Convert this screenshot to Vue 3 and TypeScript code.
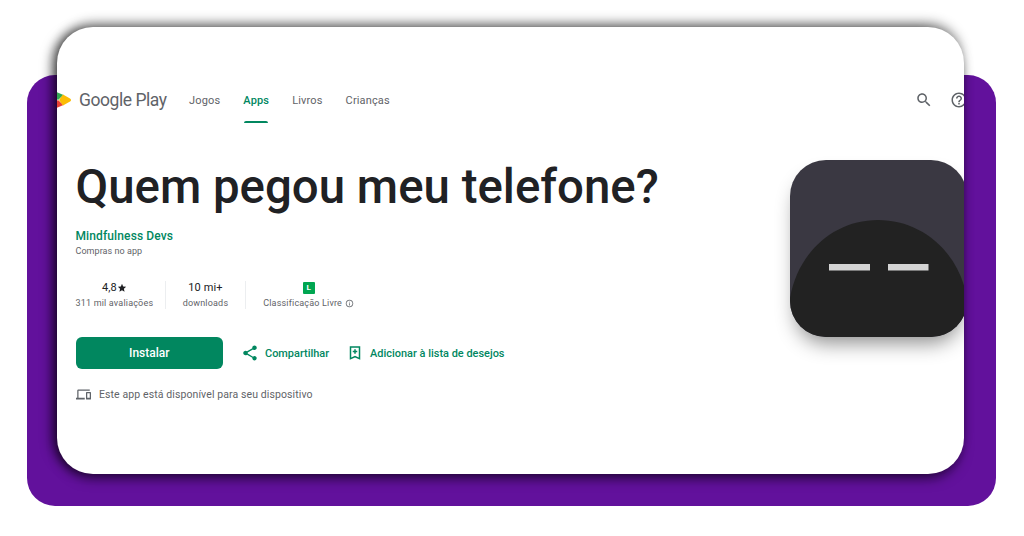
<template>
  <div class="stage">
    <div class="backdrop"></div>
    <div class="card">
      <header class="topbar">
        <svg class="play-mark" viewBox="0 0 28 20" width="28" height="20">
          <path d="M8 0 L19.5 5 L14 10 L8 6 Z" fill="#34a853" />
          <path d="M8 20 L19.5 15 L14 10 L8 14 Z" fill="#ea4335" />
          <path d="M15 10 L19 4.4 L26 8.4 Q28 10 26 11.6 L19 15.6 Z" fill="#fbbc04" />
        </svg>
        <span class="wordmark">Google Play</span>
        <nav class="nav">
          <a v-for="item in navItems" :key="item" :class="['nav-item', { active: item === 'Apps' }]">{{ item }}</a>
        </nav>
        <div class="top-icons">
          <svg viewBox="0 0 24 24" width="18" height="18"><path :d="icons.search" /></svg>
          <svg viewBox="0 0 24 24" width="18" height="18"><path :d="icons.help" /></svg>
        </div>
      </header>

      <main class="hero">
        <div class="details">
          <h1 class="title">Quem pegou meu telefone?</h1>
          <a class="developer">Mindfulness Devs</a>
          <div class="purchases">Compras no app</div>

          <div class="stats">
            <div class="stat stat-rating">
              <div class="stat-value">4,8<svg viewBox="0 0 24 24" width="10" height="10"><path :d="icons.star" /></svg></div>
              <div class="stat-label">311 mil avaliações</div>
            </div>
            <div class="stat stat-downloads">
              <div class="stat-value">10 mi+</div>
              <div class="stat-label">downloads</div>
            </div>
            <div class="stat stat-age">
              <div class="stat-value"><span class="age-badge">L</span></div>
              <div class="stat-label">
                Classificação Livre
                <svg viewBox="0 0 24 24" width="9" height="9"><path :d="icons.info" /></svg>
              </div>
            </div>
          </div>

          <div class="actions">
            <button class="install">Instalar</button>
            <a class="action action-share">
              <svg viewBox="0 0 24 24" width="18" height="18"><path :d="icons.share" /></svg>
              Compartilhar
            </a>
            <a class="action">
              <svg viewBox="0 0 24 24" width="18" height="18"><path :d="icons.bookmark" /></svg>
              Adicionar à lista de desejos
            </a>
          </div>

          <div class="device-note">
            <svg viewBox="0 0 24 24" width="15" height="15"><path :d="icons.devices" /></svg>
            Este app está disponível para seu dispositivo
          </div>
        </div>

        <div class="app-icon">
          <svg viewBox="0 0 177 177" width="177" height="177">
            <rect width="177" height="177" fill="#3a3842" />
            <path d="M0 138 C8 92 44 60 88 60 S169 92 177 138 V177 H0 Z" fill="#222222" />
            <rect x="39" y="104" width="41" height="6.5" fill="#d4d4d4" />
            <rect x="98" y="104" width="40.5" height="6.5" fill="#d4d4d4" />
          </svg>
        </div>
      </main>
    </div>
  </div>
</template>

<script setup lang="ts">
const navItems: string[] = ['Jogos', 'Apps', 'Livros', 'Crianças'];

const icons = {
  search:
    'M15.5 14h-.79l-.28-.27C15.41 12.59 16 11.11 16 9.5 16 5.91 13.09 3 9.5 3S3 5.91 3 9.5 5.91 16 9.5 16c1.61 0 3.09-.59 4.23-1.57l.27.28v.79l5 4.99L20.49 19l-4.99-5zm-6 0C7.01 14 5 11.99 5 9.5S7.01 5 9.5 5 14 7.01 14 9.5 11.99 14 9.5 14z',
  help:
    'M11 18h2v-2h-2v2zm1-16C6.48 2 2 6.48 2 12s4.48 10 10 10 10-4.48 10-10S17.52 2 12 2zm0 18c-4.41 0-8-3.59-8-8s3.59-8 8-8 8 3.59 8 8-3.59 8-8 8zm0-14c-2.21 0-4 1.79-4 4h2c0-1.1.9-2 2-2s2 .9 2 2c0 2-3 1.75-3 5h2c0-2.25 3-2.5 3-5 0-2.21-1.79-4-4-4z',
  star: 'M12 17.27L18.18 21l-1.64-7.03L22 9.24l-7.19-.61L12 2 9.19 8.63 2 9.24l5.46 4.73L5.82 21z',
  info:
    'M11 7h2v2h-2zm0 4h2v6h-2zm1-9C6.48 2 2 6.48 2 12s4.48 10 10 10 10-4.48 10-10S17.52 2 12 2zm0 18c-4.41 0-8-3.59-8-8s3.59-8 8-8 8 3.59 8 8-3.59 8-8 8z',
  share:
    'M18 16.08c-.76 0-1.44.3-1.96.77L8.91 12.7c.05-.23.09-.46.09-.7s-.04-.47-.09-.7l7.05-4.11c.54.5 1.25.81 2.04.81 1.66 0 3-1.34 3-3s-1.34-3-3-3-3 1.34-3 3c0 .24.04.47.09.7L8.04 9.81C7.5 9.31 6.79 9 6 9c-1.66 0-3 1.34-3 3s1.34 3 3 3c.79 0 1.5-.31 2.04-.81l7.12 4.16c-.05.21-.08.43-.08.65 0 1.61 1.31 2.92 2.92 2.92 1.61 0 2.92-1.31 2.92-2.92s-1.31-2.92-2.92-2.92z',
  bookmark:
    'M5 3h14v18l-7-3-7 3V3zm2 2v13l5-2.18L17 18V5H7zm4 2h2v2h2v2h-2v2h-2v-2H9V9h2V7z',
  devices:
    'M4 6h18V4H4c-1.1 0-2 .9-2 2v11H0v3h14v-3H4V6zm19 2h-6c-.55 0-1 .45-1 1v10c0 .55.45 1 1 1h6c.55 0 1-.45 1-1V9c0-.55-.45-1-1-1zm-1 9h-4v-7h4v7z',
};
</script>

<style>
html,
body {
  margin: 0;
  background: #ffffff;
}
</style>

<style scoped>
.stage {
  display: grid;
  width: 1024px;
  height: 536px;
  overflow: hidden;
  font-family: Roboto, "Liberation Sans", sans-serif;
  color: #202124;
}
.backdrop,
.card {
  grid-area: 1 / 1;
}
.backdrop {
  width: 969px;
  height: 431px;
  margin: 75px 0 0 27px;
  border-radius: 28px;
  background: #62119c;
}
.card {
  width: 907px;
  height: 447px;
  margin: 27px 0 0 57px;
  border-radius: 36px;
  background: #ffffff;
  overflow: hidden;
  box-shadow: -8px 0 12px -3px rgba(0, 0, 0, 0.6), 0 -7px 12px -3px rgba(0, 0, 0, 0.45), 0 8px 12px -3px rgba(0, 0, 0, 0.5);
}

.topbar {
  display: flex;
  align-items: center;
  height: 46px;
  margin-top: 50px;
}
.play-mark {
  flex: none;
  margin-left: -13px;
}
.wordmark {
  margin-left: 7px;
  font-size: 17.5px;
  letter-spacing: -0.45px;
  color: #5f6368;
}
.nav {
  display: flex;
  gap: 23px;
  margin-left: 22.5px;
  align-self: stretch;
}
.nav-item {
  display: flex;
  align-items: center;
  position: relative;
  height: 46px;
  font-size: 11px;
  letter-spacing: 0.15px;
  color: #5f6368;
}
.nav-item.active {
  color: #01875f;
  font-weight: 500;
}
.nav-item.active::after {
  content: "";
  position: absolute;
  left: 1px;
  right: 1px;
  bottom: 0;
  height: 2px;
  border-radius: 2px 2px 0 0;
  background: #01875f;
}
.top-icons {
  display: flex;
  gap: 17px;
  margin-left: auto;
  margin-right: -4px;
  fill: #5f6368;
}

.hero {
  display: flex;
  justify-content: space-between;
}
.details {
  padding-left: 18.5px;
}
.title {
  margin: 36px 0 0;
  font-size: 47.4px;
  line-height: 56px;
  font-weight: 500;
  color: #202124;
}
.developer {
  display: block;
  margin-top: 13px;
  font-size: 12px;
  letter-spacing: 0.12px;
  line-height: 16px;
  font-weight: 500;
  color: #01875f;
}
.purchases {
  font-size: 9px;
  letter-spacing: 0.05px;
  line-height: 14px;
  color: #5f6368;
}

.stats {
  display: flex;
  margin-top: 23px;
}
.stat {
  display: flex;
  flex-direction: column;
  align-items: center;
  justify-content: space-between;
  height: 28px;
  padding: 0 12px;
  border-left: 1px solid #eceef0;
}
.stat:first-child {
  padding: 0 11.5px 0 0;
  border-left: none;
}
.stat-value {
  display: flex;
  align-items: center;
  height: 13px;
  font-size: 11px;
  letter-spacing: 0.1px;
  color: #202124;
}
.stat-value svg {
  fill: #202124;
}
.stat-label {
  display: flex;
  align-items: center;
  gap: 3px;
  height: 12px;
  font-size: 9px;
  letter-spacing: 0.18px;
  color: #5f6368;
  white-space: nowrap;
}
.stat-label svg {
  fill: #5f6368;
}
.stat-downloads {
  padding: 0 17px;
}
.stat-age {
  padding: 0 0 0 17px;
}
.age-badge {
  display: flex;
  align-items: center;
  justify-content: center;
  width: 12px;
  height: 12px;
  border-radius: 1px;
  background: #00a651;
  color: #ffffff;
  font-size: 8px;
  font-weight: 700;
}

.actions {
  display: flex;
  align-items: center;
  margin-top: 28px;
}
.install {
  width: 147.5px;
  height: 32px;
  border: none;
  border-radius: 6px;
  background: #01875f;
  color: #ffffff;
  font-family: inherit;
  font-size: 12px;
  font-weight: 500;
}
.action {
  display: flex;
  align-items: center;
  gap: 6px;
  margin-left: 17px;
  font-size: 10.95px;
  font-weight: 500;
  color: #01875f;
  fill: #01875f;
}
.action-share {
  margin-left: 18px;
}

.device-note {
  display: flex;
  align-items: center;
  gap: 8.5px;
  margin-top: 18px;
  font-size: 10.5px;
  letter-spacing: 0.1px;
  color: #5f6368;
  fill: #5f6368;
}

.app-icon {
  flex: none;
  width: 177px;
  height: 177px;
  margin: 37px -3px 0 0;
  border-radius: 36px;
  overflow: hidden;
  box-shadow: 0 12px 20px -6px rgba(0, 0, 0, 0.45);
}
.app-icon svg {
  display: block;
}
</style>
